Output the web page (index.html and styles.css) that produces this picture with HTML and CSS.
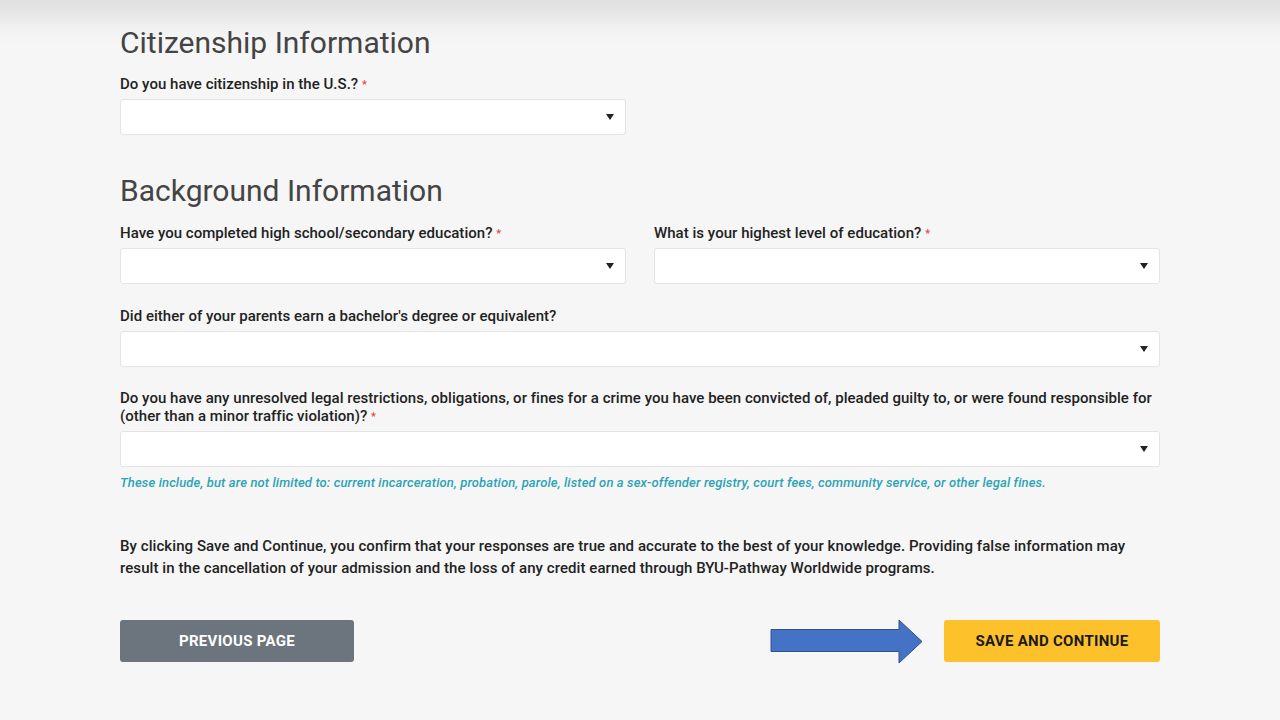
FILE: index.html
```html
<!DOCTYPE html>
<html lang="en">
<head>
<meta charset="utf-8">
<title>Application</title>
<link rel="stylesheet" href="styles.css">
</head>
<body>
<div class="shade"></div>
<main class="form">
  <h2 class="section-title">Citizenship Information</h2>
  <div class="field half">
    <label class="label">Do you have citizenship in the U.S.? <span class="req">*</span></label>
    <div class="select"></div>
  </div>

  <h2 class="section-title second">Background Information</h2>
  <div class="row">
    <div class="field">
      <label class="label">Have you completed high school/secondary education? <span class="req">*</span></label>
      <div class="select"></div>
    </div>
    <div class="field">
      <label class="label">What is your highest level of education? <span class="req">*</span></label>
      <div class="select"></div>
    </div>
  </div>
  <div class="field">
    <label class="label">Did either of your parents earn a bachelor's degree or equivalent?</label>
    <div class="select"></div>
  </div>
  <div class="field last">
    <label class="label">Do you have any unresolved legal restrictions, obligations, or fines for a crime you have been convicted of, pleaded guilty to, or were found responsible for (other than a minor traffic violation)? <span class="req">*</span></label>
    <div class="select"></div>
    <p class="help">These include, but are not limited to: current incarceration, probation, parole, listed on a sex-offender registry, court fees, community service, or other legal fines.</p>
  </div>

  <p class="confirm">By clicking Save and Continue, you confirm that your responses are true and accurate to the best of your knowledge. Providing false information may result in the cancellation of your admission and the loss of any credit earned through BYU-Pathway Worldwide programs.</p>

  <div class="actions">
    <button class="btn btn-prev">Previous Page</button>
    <div class="right">
      <svg class="arrow" width="156" height="46" viewBox="0 0 156 46">
        <polygon points="1,10.5 129,10.5 129,1 152,22.5 129,44 129,32.5 1,32.5" fill="#4472c4" stroke="#2f528f" stroke-width="1"/>
      </svg>
      <button class="btn btn-save">Save and Continue</button>
    </div>
  </div>
</main>
</body>
</html>
```

FILE: styles.css
```css
html, body {
  margin: 0;
  padding: 0;
}
body {
  background: #f6f6f6;
  font-family: Roboto, "Liberation Sans", Arial, sans-serif;
  color: #222;
  overflow: hidden;
}
.shade {
  height: 0;
  margin: 0 -20px;
  box-shadow: 0 0 32px 14px rgba(0, 0, 0, 0.13);
}
.form {
  width: 1040px;
  margin: 0 auto;
  padding-top: 25px;
}
.section-title {
  margin: 0 0 14px;
  font-size: 30px;
  line-height: 36px;
  font-weight: 400;
  color: #444;
}
.section-title.second {
  margin-top: 38px;
  margin-bottom: 15px;
}
.field {
  display: flex;
  flex-direction: column;
  margin-bottom: 22px;
}
.field.half {
  width: 506px;
  margin-bottom: 0;
}
.field.last {
  margin-bottom: 0;
}
.row {
  display: grid;
  grid-template-columns: 1fr 1fr;
  column-gap: 28px;
  margin-bottom: 1px;
}
.label {
  display: block;
  font-size: 15px;
  line-height: 18px;
  font-weight: 500;
  letter-spacing: 0.03px;
  color: #222;
  margin-bottom: 6px;
}
.req {
  color: #e0474c;
  font-size: 11px;
  line-height: 0;
  vertical-align: 1px;
}
.select {
  position: relative;
  height: 34px;
  background: #fff;
  border: 1px solid #e4e4e4;
  border-radius: 3px;
}
.select::after {
  content: "";
  position: absolute;
  right: 11px;
  top: 14px;
  border-left: 4px solid transparent;
  border-right: 4px solid transparent;
  border-top: 6px solid #222;
}
.help {
  margin: 8px 0 0;
  font-size: 13px;
  line-height: 16px;
  font-style: italic;
  font-weight: 500;
  letter-spacing: 0.13px;
  color: #2ca3b5;
}
.confirm {
  margin: 44px 0 0;
  font-size: 15px;
  line-height: 22px;
  font-weight: 500;
  letter-spacing: 0.07px;
  color: #222;
}
.actions {
  display: flex;
  justify-content: space-between;
  align-items: center;
  margin-top: 37px;
}
.right {
  display: flex;
  align-items: center;
  gap: 18px;
}
.arrow {
  display: block;
  margin-top: 3px;
}
.btn {
  height: 42px;
  padding: 0;
  border: none;
  border-radius: 3px;
  font-family: Roboto, "Liberation Sans", Arial, sans-serif;
  font-size: 15px;
  font-weight: 700;
  text-transform: uppercase;
  letter-spacing: 0.3px;
  cursor: pointer;
}
.btn-prev {
  width: 234px;
  background: #6c757d;
  color: #fff;
}
.btn-save {
  width: 216px;
  background: #fdc12b;
  color: #1a1a1a;
}
```
